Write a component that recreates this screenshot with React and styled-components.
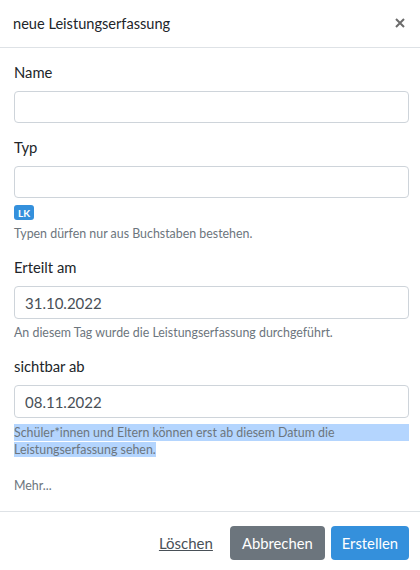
import React from 'react';
import styled, { createGlobalStyle } from 'styled-components';

const Global = createGlobalStyle`
  body {
    margin: 0;
    background: #fff;
    font-family: Lato, "Noto Sans", sans-serif;
    color: #212529;
  }
`;

const Modal = styled.div`
  width: 420px;
  background: #fff;
`;

const Header = styled.div`
  height: 47px;
  display: flex;
  align-items: center;
  justify-content: space-between;
  padding: 0 13px 0 13px;
  border-bottom: 1px solid #dee2e6;
`;

const Title = styled.h5`
  margin: 0;
  font-size: 14.6px;
  font-weight: 400;
  color: #212529;
`;

const Close = styled.button`
  border: 0;
  background: none;
  padding: 0;
  width: 12px;
  height: 12px;
  display: flex;
  cursor: pointer;
`;

const Body = styled.div`
  padding: 14px 11px 0 14px;
`;

const Group = styled.div`
  margin-bottom: ${(p) => p.$gap ?? 14}px;
`;

const Label = styled.label`
  display: block;
  font-size: 14.8px;
  line-height: 21px;
  margin-bottom: 8px;
`;

const Input = styled.input`
  display: block;
  box-sizing: border-box;
  width: 395px;
  height: ${(p) => p.$h || 32}px;
  padding: 0 10px;
  border: 1px solid #ced4da;
  border-radius: 4px;
  font-family: inherit;
  font-size: 15px;
  color: #495057;
  outline: none;
`;

const Badge = styled.span`
  display: inline-flex;
  align-items: center;
  justify-content: center;
  margin-top: 7px;
  width: 20px;
  height: 15px;
  border-radius: 3px;
  background: #3490dc;
  color: #fff;
  font-size: 10px;
  font-weight: 700;
`;

const Help = styled.div`
  font-size: 12.4px;
  line-height: ${(p) => p.$lh || 18}px;
  color: #6c757d;
  margin-top: ${(p) => p.$top || 5}px;
`;

const Marked = styled.span`
  display: ${(p) => (p.$full ? 'block' : 'inline')};
  background: #b4d5fe;
`;

const More = styled.div`
  font-size: 12.4px;
  line-height: 18px;
  color: #6c757d;
  margin-top: 19px;
  padding-bottom: 16px;
`;

const Footer = styled.div`
  display: flex;
  justify-content: flex-end;
  align-items: center;
  gap: 6px;
  padding: 14px 11px 10px 14px;
  border-top: 1px solid #dee2e6;
`;

const LinkButton = styled.button`
  border: 0;
  background: none;
  font-family: inherit;
  font-size: 15px;
  color: #495057;
  text-decoration: underline;
  padding: 0 11px 0 0;
  cursor: pointer;
`;

const Button = styled.button`
  height: 34px;
  padding: 0 ${(p) => p.$px || 12}px;
  border: 0;
  border-radius: 4px;
  background: ${(p) => (p.$primary ? '#3490dc' : '#6c757d')};
  color: #fff;
  font-family: inherit;
  font-size: 14.8px;
  cursor: pointer;
`;

export default function App() {
  return (
    <Modal>
      <Global />
      <Header>
        <Title>neue Leistungserfassung</Title>
        <Close aria-label="Schließen">
          <svg width="10" height="10" viewBox="0 0 10 10">
            <path d="M1 1L9 9M9 1L1 9" stroke="#6b6b6b" strokeWidth="2" />
          </svg>
        </Close>
      </Header>
      <Body>
        <Group>
          <Label>Name</Label>
          <Input />
        </Group>
        <Group>
          <Label>Typ</Label>
          <Input />
          <Badge>LK</Badge>
          <Help>Typen dürfen nur aus Buchstaben bestehen.</Help>
        </Group>
        <Group>
          <Label>Erteilt am</Label>
          <Input $h={33} defaultValue="31.10.2022" />
          <Help>An diesem Tag wurde die Leistungserfassung durchgeführt.</Help>
        </Group>
        <Group $gap={0}>
          <Label>sichtbar ab</Label>
          <Input $h={33} defaultValue="08.11.2022" />
          <Help $top={6} $lh={17}>
            <Marked $full>Schüler*innen und Eltern können erst ab diesem Datum die</Marked>
            <Marked>Leistungserfassung sehen.</Marked>
          </Help>
        </Group>
        <More>Mehr...</More>
      </Body>
      <Footer>
        <LinkButton>Löschen</LinkButton>
        <Button $px={12}>Abbrechen</Button>
        <Button $primary $px={11}>Erstellen</Button>
      </Footer>
    </Modal>
  );
}
